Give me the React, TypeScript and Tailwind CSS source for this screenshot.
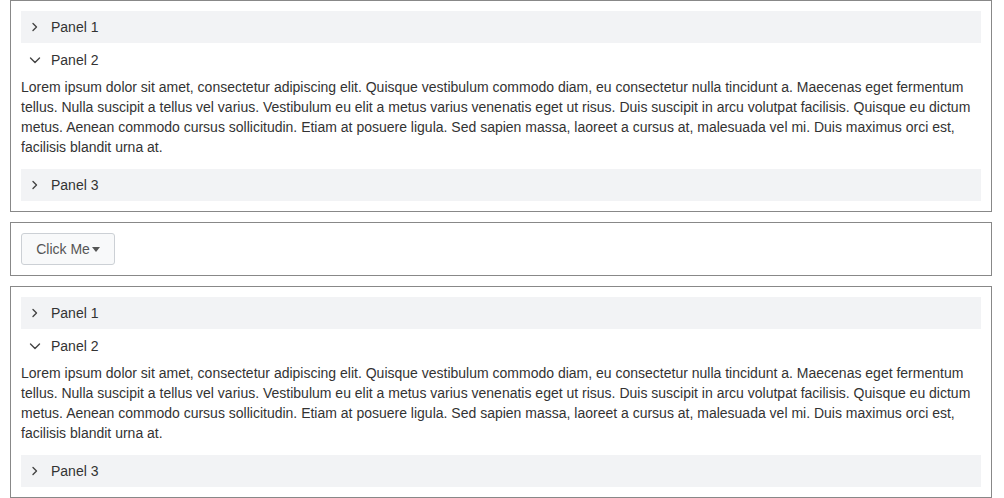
import React from "react";

const LOREM =
  "Lorem ipsum dolor sit amet, consectetur adipiscing elit. Quisque vestibulum commodo diam, eu consectetur nulla tincidunt a. Maecenas eget fermentum tellus. Nulla suscipit a tellus vel varius. Vestibulum eu elit a metus varius venenatis eget ut risus. Duis suscipit in arcu volutpat facilisis. Quisque eu dictum metus. Aenean commodo cursus sollicitudin. Etiam at posuere ligula. Sed sapien massa, laoreet a cursus at, malesuada vel mi. Duis maximus orci est, facilisis blandit urna at.";

function ChevronRight() {
  return (
    <svg width="16" height="16" viewBox="0 0 16 16" fill="none">
      <path d="M6 4.5 L9.5 8 L6 11.5" stroke="#444" strokeWidth="1.4" strokeLinecap="round" strokeLinejoin="round" />
    </svg>
  );
}

function ChevronDown() {
  return (
    <svg width="16" height="16" viewBox="0 0 16 16" fill="none">
      <path d="M3.5 6 L8 10.5 L12.5 6" stroke="#444" strokeWidth="1.4" strokeLinecap="round" strokeLinejoin="round" />
    </svg>
  );
}

function Header({ label, open }: { label: string; open?: boolean }) {
  return (
    <div className={`flex items-center pl-1.5 ${open ? "h-[34px]" : "h-8 bg-[#f2f3f5]"}`}>
      <span className="flex w-4 h-4 items-center justify-center">{open ? <ChevronDown /> : <ChevronRight />}</span>
      <span className="ml-2 text-[14px] text-[#333]">{label}</span>
    </div>
  );
}

function Accordion() {
  return (
    <div className="border border-[#888] p-2.5">
      <Header label="Panel 1" />
      <Header label="Panel 2" open />
      <div className="pb-3">
        <p className="text-[14px] leading-5 text-[#333]">{LOREM}</p>
      </div>
      <Header label="Panel 3" />
    </div>
  );
}

export default function App() {
  return (
    <div className="bg-white pl-2.5 pr-3 pb-px font-['Liberation_Sans',Arial,sans-serif]">
      <Accordion />
      <div className="mt-2.5 border border-[#888] p-2.5">
        <button className="flex h-8 w-[94px] items-center justify-center rounded-[3px] border border-[#ccd0d5] bg-[#f8f9fa] text-[14px] text-[#555]">
          <span>Click Me</span>
          <svg width="8" height="5" viewBox="0 0 8 5" className="ml-[2px] mt-[1px]">
            <path d="M0 0 L8 0 L4 5 Z" fill="#555" />
          </svg>
        </button>
      </div>
      <div className="mt-2.5">
        <Accordion />
      </div>
    </div>
  );
}
